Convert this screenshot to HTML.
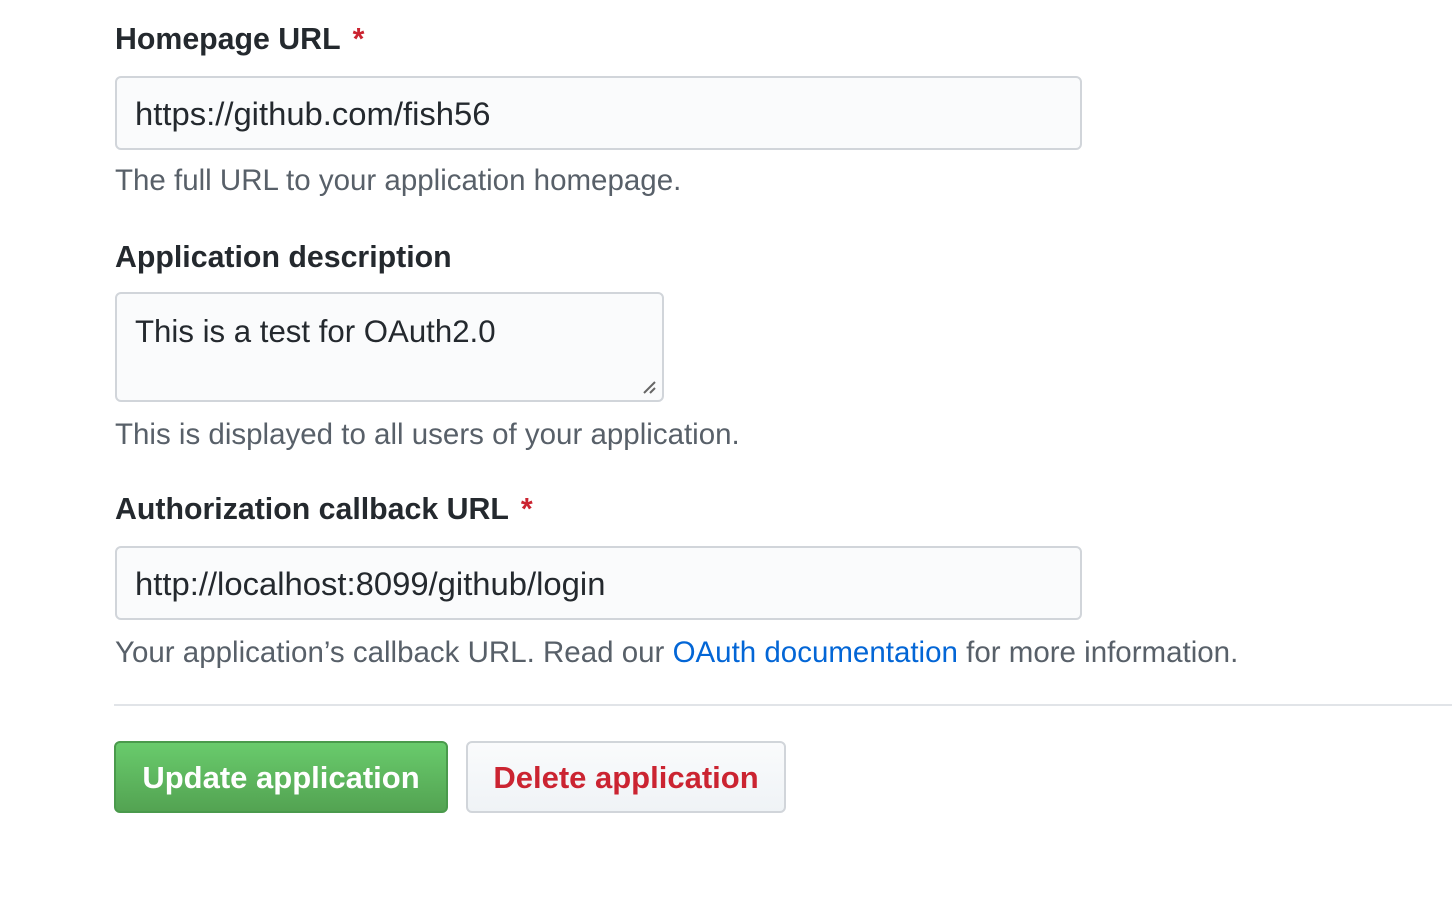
<!DOCTYPE html>
<html><head><meta charset="utf-8"><style>
body{margin:0;width:1452px;height:902px;background:#fff;font-family:"Liberation Sans",Helvetica,Arial,sans-serif;position:relative;overflow:hidden;color:#24292e}
.a{position:absolute;white-space:nowrap}
.lbl{font-weight:bold;font-size:30.3px;left:115px}
.req{color:#cb2431;margin-left:12px}
.inp{position:absolute;left:115px;box-sizing:border-box;border:2px solid #d1d5da;border-radius:6px;background:#fafbfc;font-size:32.8px;padding-left:18px;color:#24292e;white-space:nowrap}
.help{font-size:29.5px;color:#586069;left:115px}
.btn{position:absolute;top:741px;height:72px;box-sizing:border-box;border-radius:6px;font-weight:bold;font-size:31px;line-height:70px;text-align:center}
</style></head><body>
<div class="a lbl" style="top:23px">Homepage URL<span class="req">*</span></div>
<div class="inp" style="top:76px;width:967px;height:74px;line-height:72px">https://github.com/fish56</div>
<div class="a help" style="top:164px">The full URL to your application homepage.</div>
<div class="a lbl" style="top:241px">Application description</div>
<div class="inp" style="top:292px;width:549px;height:110px;line-height:36px;padding-top:20px;font-size:31.2px">This is a test for OAuth2.0
<svg style="position:absolute;right:6px;bottom:6px" width="14" height="14"><path d="M2 13L13 2M8 13L13 8" stroke="#666" stroke-width="2"/></svg></div>
<div class="a help" style="top:418px">This is displayed to all users of your application.</div>
<div class="a lbl" style="top:493px">Authorization callback URL<span class="req">*</span></div>
<div class="inp" style="top:546px;width:967px;height:74px;line-height:72px">http://localhost:8099/github/login</div>
<div class="a help" style="top:636px">Your application’s callback URL. Read our <span style="color:#0366d6">OAuth documentation</span> for more information.</div>
<div class="a" style="top:704px;left:114px;width:1338px;height:2px;background:#e1e4e8"></div>
<div class="btn" style="left:114px;width:334px;color:#fff;background:linear-gradient(#69cb6c,#53a352);border:2px solid #4a9a4c">Update application</div>
<div class="btn" style="left:466px;width:320px;color:#cb2431;background:linear-gradient(#fafbfc,#eff3f6);border:2px solid #d1d5da">Delete application</div>
</body></html>
